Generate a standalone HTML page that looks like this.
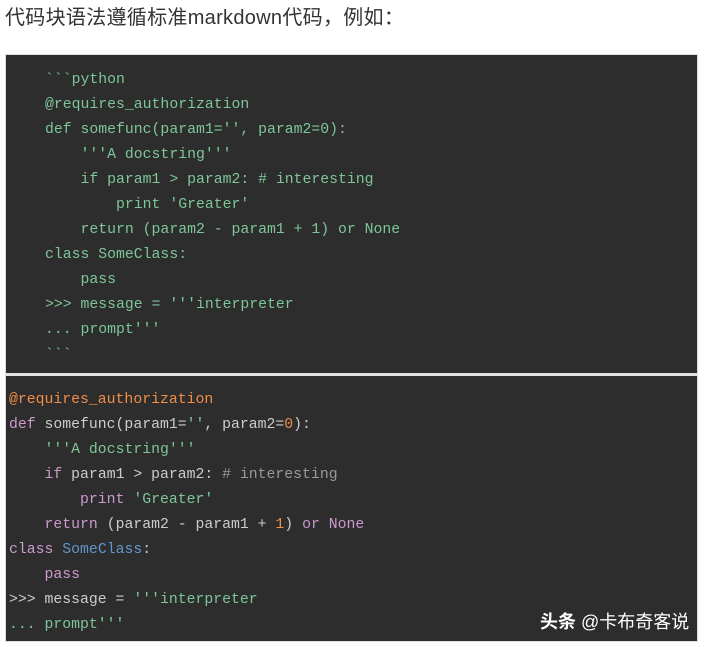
<!DOCTYPE html>
<html><head><meta charset="utf-8"><style>
body{margin:0;background:#fff;width:704px;height:647px;overflow:hidden;position:relative}
.t{position:absolute;left:5px;top:3px;font-size:20px;font-family:"Liberation Sans","Noto Sans CJK SC",sans-serif;color:#333;line-height:30px;white-space:nowrap;letter-spacing:0.3px}
.b{position:absolute;left:5px;width:693px;background:#2d2d2d;border:1px solid #ddd;box-sizing:border-box;z-index:1}
.code{position:absolute;z-index:2;font-family:"Liberation Mono",monospace;font-size:14.8px;line-height:25px;color:#ccc;white-space:pre}
.g{color:#7ec699}.o{color:#f08d49}.k{color:#cc99cd}.c{color:#999}.n{color:#6196cc}
.w{position:absolute;z-index:3;left:540px;top:608px;color:#fff;font-size:18px;font-family:"Liberation Sans","Noto Sans CJK SC",sans-serif;white-space:nowrap}
</style></head><body>
<div class="t">代码块语法遵循标准markdown代码，例如：</div>
<div class="b" style="top:54px;height:320px"></div>
<div class="b" style="top:374px;height:268px;border-top:2px solid #e4e4e4"></div>
<div class="code g" style="left:45px;top:68px">&#96;&#96;&#96;python
@requires_authorization
def somefunc(param1='', param2=0):
    '''A docstring'''
    if param1 &gt; param2: # interesting
        print 'Greater'
    return (param2 - param1 + 1) or None
class SomeClass:
    pass
&gt;&gt;&gt; message = '''interpreter
... prompt'''
&#96;&#96;&#96;</div>
<div class="code" style="left:9px;top:388px"><span class="o">@requires_authorization</span>
<span class="k">def</span> somefunc(param1=<span class="g">''</span>, param2=<span class="o">0</span>):
    <span class="g">'''A docstring'''</span>
    <span class="k">if</span> param1 &gt; param2: <span class="c"># interesting</span>
        <span class="k">print</span> <span class="g">'Greater'</span>
    <span class="k">return</span> (param2 - param1 + <span class="o">1</span>) <span class="k">or</span> <span class="k">None</span>
<span class="k">class</span> <span class="n">SomeClass</span>:
    <span class="k">pass</span>
&gt;&gt;&gt; message = <span class="g">'''interpreter</span>
<span class="g">... prompt'''</span></div>
<div class="w"><b>头条</b> @卡布奇客说</div>
</body></html>
